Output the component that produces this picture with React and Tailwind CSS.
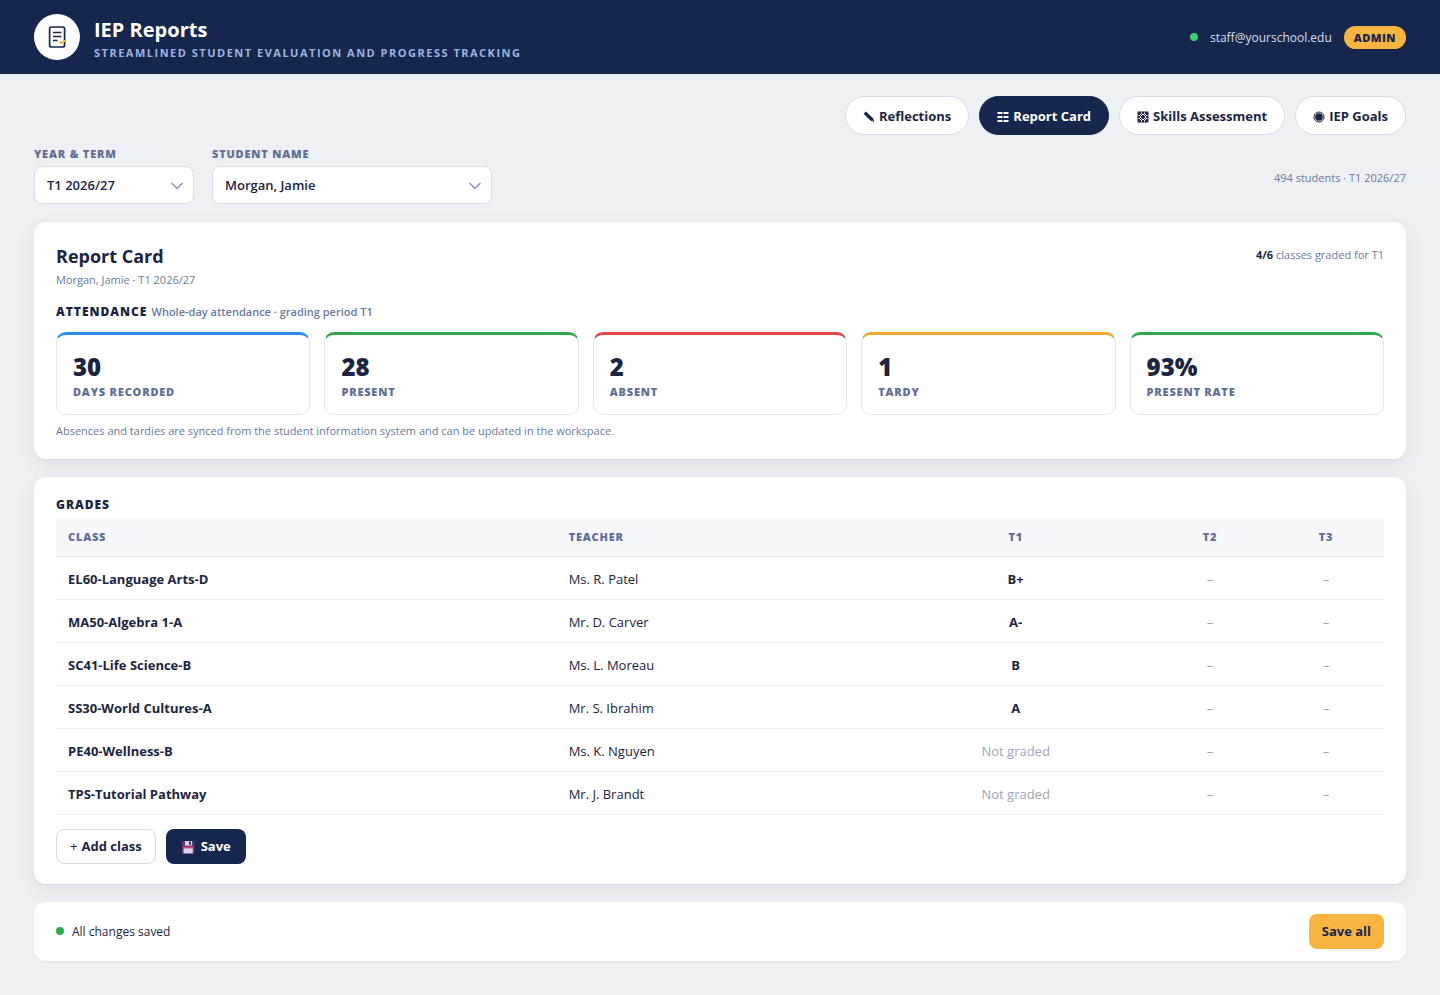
import React, { useState } from "react";

const stats = [
  { value: "30", label: "Days recorded", color: "border-t-[#2f8cf0]" },
  { value: "28", label: "Present", color: "border-t-[#2fa84f]" },
  { value: "2", label: "Absent", color: "border-t-[#e04848]" },
  { value: "1", label: "Tardy", color: "border-t-[#f0a52e]" },
  { value: "93%", label: "Present rate", color: "border-t-[#2fa84f]" },
];

const classes = [
  { name: "EL60-Language Arts-D", teacher: "Ms. R. Patel", t1: "B+" },
  { name: "MA50-Algebra 1-A", teacher: "Mr. D. Carver", t1: "A-" },
  { name: "SC41-Life Science-B", teacher: "Ms. L. Moreau", t1: "B" },
  { name: "SS30-World Cultures-A", teacher: "Mr. S. Ibrahim", t1: "A" },
  { name: "PE40-Wellness-B", teacher: "Ms. K. Nguyen", t1: null },
  { name: "TPS-Tutorial Pathway", teacher: "Mr. J. Brandt", t1: null },
];

const LogoIcon = () => (
  <svg width="24" height="24" viewBox="0 0 24 24" fill="none" aria-hidden="true">
    <rect x="4.6" y="2" width="15" height="20" rx="2" stroke="#16264c" strokeWidth="1.7" />
    <path d="M8 7.5h8.4M8 11.5h8.4M8 15.5h4.6" stroke="#16264c" strokeWidth="1.5" />
    <path d="M14.2 16.4l2.2 1.8 3.8-2.8" stroke="#f6b440" strokeWidth="1.8" />
  </svg>
);

const PencilIcon = () => (
  <svg width="12" height="12" viewBox="0 0 12 12" aria-hidden="true">
    <path d="M.6 2.8L3 .6l7 6.6 1.5 4-4.1-1.6z" fill="currentColor" />
    <path d="M9 9.6l1.3.9" stroke="#fff" strokeWidth=".6" />
  </svg>
);

const ListIcon = () => (
  <svg width="12" height="12" viewBox="0 0 12 12" aria-hidden="true">
    <path
      d="M.5 2h5M6.5 2h5M.5 6h5M6.5 6h5M.5 10h5M6.5 10h5"
      stroke="currentColor"
      strokeWidth="2"
    />
  </svg>
);

const GridIcon = () => (
  <svg width="12" height="12" viewBox="0 0 12 12" aria-hidden="true">
    <rect x="1" y="1" width="10" height="10" fill="none" stroke="currentColor" />
    <path
      d="M1 4l3-3M1 7l6-6M1 10l9-9M2 11l9-9M5 11l6-6M8 11l3-3M8 1l3 3M5 1l6 6M2 1l9 9M1 2l9 9M1 5l6 6M1 8l3 3"
      stroke="currentColor"
      strokeWidth="1"
    />
  </svg>
);

const TargetIcon = () => (
  <svg width="12" height="12" viewBox="0 0 12 12" aria-hidden="true">
    <circle cx="6" cy="6" r="5" fill="none" stroke="currentColor" strokeWidth="1" />
    <circle cx="6" cy="6" r="3.8" fill="currentColor" />
  </svg>
);

const FloppyIcon = () => (
  <svg width="14" height="14" viewBox="0 0 14 14" aria-hidden="true">
    <path d="M1 1h11l1.4 1.4V13.4H1z" fill="#54407c" />
    <rect x="4" y="1" width="7" height="4.6" fill="#d9d2e6" />
    <rect x="8" y="1.4" width="1.8" height="3.4" fill="#3f2d63" />
    <rect x="2.6" y="7" width="9.2" height="6.4" fill="#e0d3ee" />
    <rect x="2.6" y="6.6" width="9.2" height="1.8" fill="#d8466e" />
  </svg>
);

const Chevron = () => (
  <svg
    className="pointer-events-none absolute right-2.5 top-3"
    width="14"
    height="14"
    viewBox="0 0 14 14"
    fill="none"
    aria-hidden="true"
  >
    <path d="M1.5 5L7 10.5 12.5 5" stroke="#7b89ab" strokeWidth="1.2" />
  </svg>
);

const tabs = [
  { name: "Reflections", icon: <PencilIcon /> },
  { name: "Report Card", icon: <ListIcon /> },
  { name: "Skills Assessment", icon: <GridIcon /> },
  { name: "IEP Goals", icon: <TargetIcon /> },
];

const App = () => {
  const [tab, setTab] = useState("Report Card");

  const renderRows = () => {
    return classes.map((item) => (
      <tr key={item.name} className="h-[43px] border-b border-[#edf0f5]">
        <td className="px-3 pt-1 font-bold">{item.name}</td>
        <td className="px-3 pt-1">{item.teacher}</td>
        <td className="px-3 pt-1 text-center">
          {item.t1 ? (
            <span className="font-bold">{item.t1}</span>
          ) : (
            <span className="text-[#9aa6c1]">Not graded</span>
          )}
        </td>
        <td className="px-3 pt-1 text-center text-[#9aa6c1]">–</td>
        <td className="px-3 pt-1 text-center text-[#9aa6c1]">–</td>
      </tr>
    ));
  };

  return (
    <div className="min-h-screen bg-[#edf0f5] font-['Open_Sans','Noto_Sans',sans-serif] text-[13px] text-[#1b2541]">
      <header className="flex items-center justify-between bg-[#16264c] px-[34px] py-2.5">
        <div className="flex items-center gap-3.5">
          <div className="flex h-[46px] w-[46px] items-center justify-center rounded-full bg-white">
            <LogoIcon />
          </div>
          <div className="pt-2">
            <h1 className="text-xl leading-6 font-bold text-white">IEP Reports</h1>
            <p className="text-[11px] leading-[22px] font-bold tracking-[1.5px] text-[#9db3e0] uppercase">
              Streamlined student evaluation and progress tracking
            </p>
          </div>
        </div>
        <div className="flex items-center gap-3">
          <span className="h-2 w-2 rounded-full bg-[#3ecf74]"></span>
          <span className="pt-0.5 text-xs text-[#d5def2]">staff@yourschool.edu</span>
          <span className="rounded-full bg-[#f6b440] px-2.5 text-[11px] leading-[23px] font-extrabold tracking-[0.5px] text-[#16264c]">
            ADMIN
          </span>
        </div>
      </header>

      <main className="px-[34px] pt-[22px] pb-[34px]">
        <nav className="flex flex-wrap justify-end gap-2.5">
          {tabs.map((item) => (
            <button
              key={item.name}
              onClick={() => setTab(item.name)}
              className={`flex h-[39px] items-center gap-1 rounded-full border px-[17px] pt-0.5 font-bold ${
                tab === item.name
                  ? "border-[#16264c] bg-[#16264c] text-white"
                  : "border-[#d7ddeb] bg-white"
              }`}
            >
              {item.icon}
              {item.name}
            </button>
          ))}
        </nav>

        <div className="mt-2.5 flex items-center justify-between">
          <div className="flex gap-[18px]">
            <div className="w-40">
              <label
                htmlFor="term"
                className="mb-1 block text-[11px] leading-[17px] font-extrabold tracking-[0.8px] text-[#5f6f94] uppercase"
              >
                Year &amp; Term
              </label>
              <div className="relative">
                <select
                  id="term"
                  className="h-[38px] w-full appearance-none rounded-lg border border-[#d7ddeb] bg-white px-3 pt-0.5 font-semibold"
                >
                  <option>T1 2026/27</option>
                </select>
                <Chevron />
              </div>
            </div>
            <div className="w-[280px]">
              <label
                htmlFor="student"
                className="mb-1 block text-[11px] leading-[17px] font-extrabold tracking-[0.8px] text-[#5f6f94] uppercase"
              >
                Student Name
              </label>
              <div className="relative">
                <select
                  id="student"
                  className="h-[38px] w-full appearance-none rounded-lg border border-[#d7ddeb] bg-white px-3 pt-0.5 font-semibold"
                >
                  <option>Morgan, Jamie</option>
                </select>
                <Chevron />
              </div>
            </div>
          </div>
          <p className="pt-1.5 text-[11px] leading-4 text-[#6b7a9c]">494 students · T1 2026/27</p>
        </div>

        <section className="mt-[18px] rounded-xl bg-white px-[22px] py-5 shadow-[0_6px_20px_rgba(22,38,76,0.07),0_1px_2px_rgba(22,38,76,0.06)]">
          <div className="flex items-start justify-between">
            <div>
              <h2 className="text-lg leading-7 font-bold">Report Card</h2>
              <p className="text-[11px] leading-5 text-[#6b7a9c]">Morgan, Jamie · T1 2026/27</p>
            </div>
            <p className="text-[11px] leading-[26px] text-[#6b7a9c]">
              <b className="text-[#1b2541]">4/6</b> classes graded for T1
            </p>
          </div>
          <h3 className="mt-3 text-xs leading-5 font-extrabold tracking-[1px]">
            ATTENDANCE{" "}
            <span className="text-[11px] font-semibold tracking-normal text-[#6b7a9c]">
              Whole-day attendance · grading period T1
            </span>
          </h3>
          <div className="mt-2.5 grid grid-cols-5 gap-3.5">
            {stats.map((item) => (
              <div
                key={item.label}
                className={`rounded-[10px] border border-t-3 border-[#e4e8f2] px-4 pt-[17px] pb-3 ${item.color}`}
              >
                <p className="text-2xl leading-[30px] font-extrabold">{item.value}</p>
                <p className="text-[11px] leading-5 font-extrabold tracking-[0.8px] text-[#5f6f94] uppercase">
                  {item.label}
                </p>
              </div>
            ))}
          </div>
          <p className="mt-2 text-[11px] leading-4 text-[#6b7a9c]">
            Absences and tardies are synced from the student information system and can be updated
            in the workspace.
          </p>
        </section>

        <section className="mt-[18px] rounded-xl bg-white px-[22px] py-5 shadow-[0_6px_20px_rgba(22,38,76,0.07),0_1px_2px_rgba(22,38,76,0.06)]">
          <h3 className="mb-1.5 text-xs leading-[15px] font-extrabold tracking-[1px]">GRADES</h3>
          <table className="w-full table-fixed border-collapse">
            <thead>
              <tr className="h-[38px] border-b border-[#e4e8f2] bg-[#f6f8fc] text-[11px] tracking-[0.8px] text-[#5f6f94] uppercase">
                <th className="w-[37.7%] px-3 text-left font-extrabold">Class</th>
                <th className="w-[24.3%] px-3 text-left font-extrabold">Teacher</th>
                <th className="px-3 font-extrabold">T1</th>
                <th className="w-[116px] px-3 font-extrabold">T2</th>
                <th className="w-[116px] px-3 font-extrabold">T3</th>
              </tr>
            </thead>
            <tbody>{renderRows()}</tbody>
          </table>
          <div className="mt-3.5 flex gap-2.5">
            <button className="flex h-[35px] items-center gap-1 rounded-lg border border-[#d7ddeb] bg-white px-[13px] pt-0.5 font-bold">
              <span className="font-normal">+</span>
              Add class
            </button>
            <button className="flex h-[35px] items-center gap-1.5 rounded-lg bg-[#16264c] px-[15px] pt-0.5 font-bold text-white">
              <FloppyIcon />
              Save
            </button>
          </div>
        </section>

        <footer className="mt-[18px] flex items-center justify-between rounded-xl bg-white px-[22px] py-3 shadow-[0_1px_2px_rgba(22,38,76,0.06)]">
          <div className="flex items-center gap-2 text-xs">
            <span className="h-2 w-2 rounded-full bg-[#2fa84f]"></span>
            <span className="pt-0.5">All changes saved</span>
          </div>
          <button className="h-[35px] rounded-lg bg-[#f6b440] px-[13px] pt-0.5 font-bold text-[#16264c]">
            Save all
          </button>
        </footer>
      </main>
    </div>
  );
};

export default App;
